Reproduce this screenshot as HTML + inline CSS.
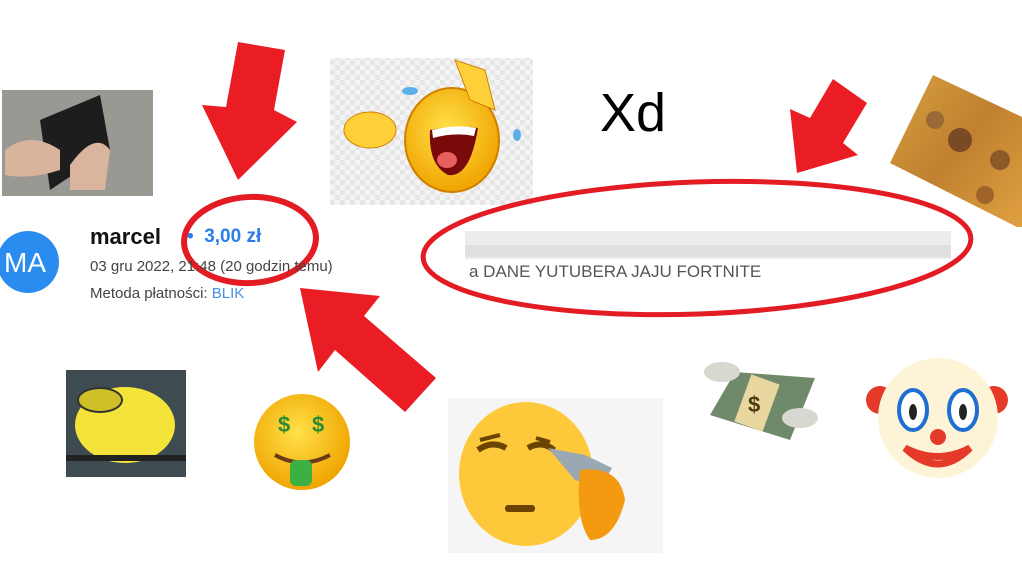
<!DOCTYPE html>
<html><head><meta charset="utf-8"><style>
html,body{margin:0;padding:0;background:#fff;width:1022px;height:575px;overflow:hidden;position:relative;font-family:"Liberation Sans",sans-serif}
.t{position:absolute;white-space:nowrap}
</style></head><body>
<svg width="1022" height="575" style="position:absolute;left:0;top:0">
<defs>
<pattern id="ck" width="10" height="10" patternUnits="userSpaceOnUse"><rect width="10" height="10" fill="#f4f4f4"/><rect width="5" height="5" fill="#e6e6e6"/><rect x="5" y="5" width="5" height="5" fill="#e6e6e6"/></pattern>
<radialGradient id="yl" cx="45%" cy="40%" r="60%"><stop offset="0" stop-color="#ffe14a"/><stop offset="1" stop-color="#f0a400"/></radialGradient>
<linearGradient id="food" x1="0" y1="0" x2="1" y2="1"><stop offset="0" stop-color="#d8a040"/><stop offset=".5" stop-color="#c08030"/><stop offset="1" stop-color="#e0a040"/></linearGradient>
</defs>
<rect x="2" y="90" width="151" height="106" fill="#8e8c86"/>
<rect x="2" y="90" width="151" height="106" fill="#a5a39d" opacity=".5"/>
<path d="M40 120 L100 95 L110 150 L50 190 Z" fill="#1d1d1d"/>
<path d="M5 150 Q30 130 60 150 L60 170 Q30 180 5 175Z" fill="#d8b49c"/>
<path d="M70 165 Q95 130 110 150 L105 190 L70 190Z" fill="#d9b59e"/>
<polygon points="238,42 285,50 274,110 297,122 238,180 202,105 226,107" fill="#ea1d25"/>
<rect x="330" y="58" width="203" height="147" fill="url(#ck)"/>
<ellipse cx="452" cy="140" rx="47" ry="52" fill="url(#yl)" stroke="#d08000" stroke-width="2"/>
<path d="M430 130 Q455 125 478 128 Q470 178 448 175 Q428 165 430 130Z" fill="#7a0a0a"/>
<path d="M432 130 Q455 124 476 128 L474 136 Q455 132 433 138Z" fill="#fff"/>
<ellipse cx="447" cy="160" rx="10" ry="8" fill="#e8605e"/>
<ellipse cx="370" cy="130" rx="26" ry="18" fill="#ffcf3a" stroke="#d08000"/>
<path d="M455 60 L470 100 L495 110 L485 70Z" fill="#ffcf3a" stroke="#d08000"/>
<ellipse cx="410" cy="91" rx="8" ry="4" fill="#5ab0e8"/>
<ellipse cx="517" cy="135" rx="4" ry="6" fill="#5ab0e8"/>
<polygon points="833,79 867,103 843,143 858,155 797,173 790,109 810,118" fill="#ea1d25"/>
<polygon points="933,75 1022,117 1022,227 1017,227 890,163" fill="url(#food)"/>
<circle cx="960" cy="140" r="12" fill="#7a4a24"/><circle cx="1000" cy="160" r="10" fill="#8a5a2a"/><circle cx="935" cy="120" r="9" fill="#9a6a34"/><circle cx="985" cy="195" r="9" fill="#a0642a"/>
<circle cx="28" cy="262" r="31" fill="#2b8cf0"/>
<ellipse cx="250" cy="240" rx="66" ry="43" fill="none" stroke="#e31b23" stroke-width="6" transform="rotate(-3 250 240)"/>
<ellipse cx="697" cy="248" rx="274" ry="66" fill="none" stroke="#e31b23" stroke-width="5" transform="rotate(-2 697 248)"/>
<rect x="465" y="231" width="486" height="28" fill="#ececec"/>
<rect x="465" y="245" width="486" height="12" fill="#e0e0e0"/>
<polygon points="300,288 380,296 364,316 436,378 405,412 335,350 318,372" fill="#ea1d25"/>
<rect x="66" y="370" width="120" height="107" fill="#3e4c52"/>
<ellipse cx="125" cy="425" rx="50" ry="38" fill="#f4e43a"/>
<ellipse cx="100" cy="400" rx="22" ry="12" fill="#cfc02a" stroke="#333" stroke-width="2"/>
<rect x="66" y="455" width="120" height="6" fill="#222"/>
<circle cx="302" cy="442" r="48" fill="url(#yl)"/>
<text x="278" y="432" font-size="22" font-weight="bold" fill="#2f8a2f" font-family="Liberation Sans">$</text>
<text x="312" y="432" font-size="22" font-weight="bold" fill="#2f8a2f" font-family="Liberation Sans">$</text>
<path d="M275 455 Q302 470 330 455" stroke="#6a3a1a" stroke-width="4" fill="none"/>
<rect x="290" y="460" width="22" height="26" rx="6" fill="#3cb043"/>
<rect x="448" y="398" width="215" height="155" fill="#f5f5f5"/>
<ellipse cx="526" cy="474" rx="67" ry="72" fill="#fdc93a"/>
<path d="M478 450 Q492 440 506 448 M528 448 Q542 440 554 450" stroke="#6a4400" stroke-width="6" fill="none"/>
<path d="M480 440 L500 435 M536 438 L550 442" stroke="#6a4400" stroke-width="4"/>
<rect x="505" y="505" width="30" height="7" rx="3" fill="#6a4400"/>
<path d="M548 448 L585 455 L612 468 L600 488 L575 480 Z" fill="#9aa8b4"/>
<path d="M580 470 Q620 465 625 500 Q615 540 590 540 Q575 520 580 470Z" fill="#f49a10"/>
<polygon points="710,415 735,372 815,378 790,440" fill="#6f8a6a"/>
<rect x="742" y="378" width="30" height="50" fill="#e8d8a0" transform="rotate(20 757 403)"/>
<text x="748" y="412" font-size="22" font-weight="bold" fill="#4a3a10">$</text>
<ellipse cx="722" cy="372" rx="18" ry="10" fill="#d8d8d0"/>
<ellipse cx="800" cy="418" rx="18" ry="10" fill="#d8d8d0"/>
<circle cx="880" cy="400" r="14" fill="#e53a2a"/><circle cx="994" cy="400" r="14" fill="#e53a2a"/>
<circle cx="938" cy="418" r="60" fill="#fdf4d8"/>
<ellipse cx="913" cy="410" rx="14" ry="20" fill="#fff" stroke="#1e6fd0" stroke-width="4"/>
<ellipse cx="963" cy="410" rx="14" ry="20" fill="#fff" stroke="#1e6fd0" stroke-width="4"/>
<ellipse cx="913" cy="412" rx="4" ry="8" fill="#222"/><ellipse cx="963" cy="412" rx="4" ry="8" fill="#222"/>
<circle cx="938" cy="437" r="8" fill="#e53a2a"/>
<path d="M905 448 Q938 480 970 448 Q938 465 905 448Z" fill="#fff" stroke="#e53a2a" stroke-width="7"/>
</svg>
<div class="t" style="left:600px;top:82px;font-size:54px;color:#000">Xd</div>
<div class="t" style="left:4px;top:247px;font-size:28px;color:#fff">MA</div>
<div class="t" style="left:90px;top:224px;font-size:22px;font-weight:bold;color:#111">marcel</div>
<div class="t" style="left:187px;top:226px;font-size:19px;font-weight:bold;color:#2b7de8">•&nbsp; 3,00 zł</div>
<div class="t" style="left:90px;top:258px;font-size:15px;color:#444">03 gru 2022, 21:48 (20 godzin temu)</div>
<div class="t" style="left:90px;top:285px;font-size:15px;color:#444">Metoda płatności: <span style="color:#4a90e2">BLIK</span></div>
<div class="t" style="left:469px;top:262px;font-size:17px;color:#555">a DANE YUTUBERA JAJU FORTNITE</div>
</body></html>
